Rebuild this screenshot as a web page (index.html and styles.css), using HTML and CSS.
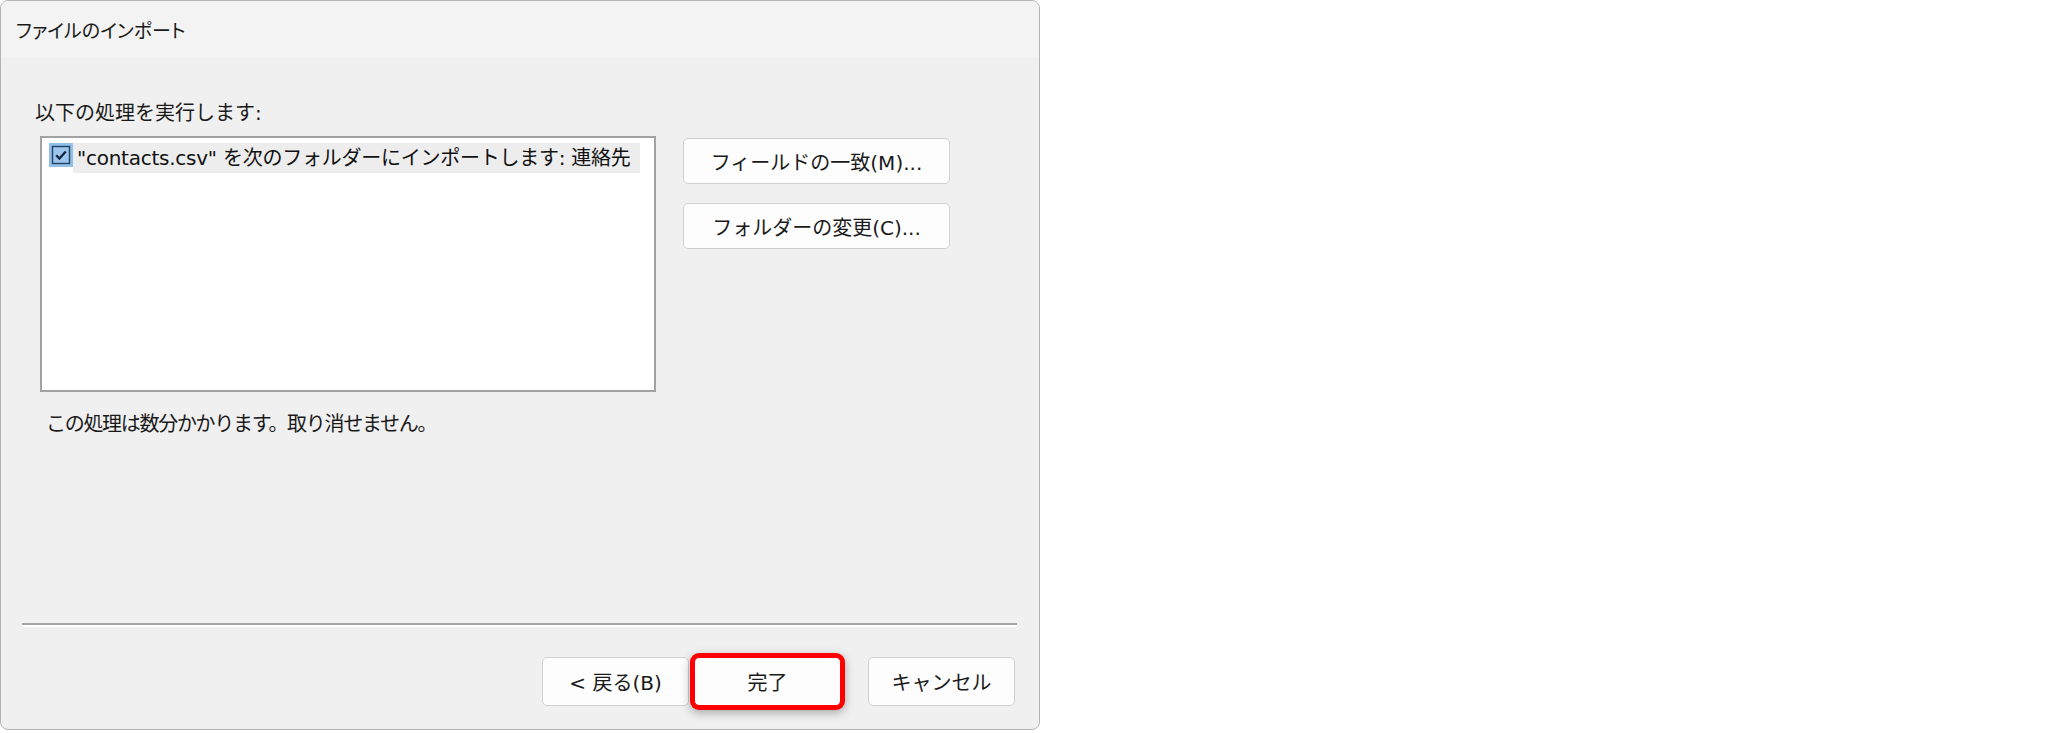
FILE: index.html
```html
<!DOCTYPE html>
<html lang="ja">
<head>
    <meta charset="utf-8">
    <title>ファイルのインポート</title>
    <link rel="stylesheet" href="styles.css">
</head>
<body>

    <div class="dialog">

        <header class="titlebar">ファイルのインポート</header>

        <section class="content">
            <div class="label">以下の処理を実行します:</div>

            <div class="work">
                <div class="listbox">
                    <div class="item">
                        <svg class="check" width="24" height="24" viewBox="0 0 24 24">
                            <rect x="0" y="0" width="24" height="24" fill="#93c0ea"/>
                            <rect x="3.5" y="3.5" width="17" height="17" fill="#9cc6ee" stroke="#22405f" stroke-width="1.4"/>
                            <path d="M7.2 12.2 L10.4 15.6 L16.8 8.4" fill="none" stroke="#0d2642" stroke-width="2.2"/>
                        </svg>
                        <span class="item_text">"contacts.csv" を次のフォルダーにインポートします: 連絡先</span>
                    </div>
                </div>

                <div class="side_buttons">
                    <button class="button side">フィールドの一致(M)...</button>
                    <button class="button side">フォルダーの変更(C)...</button>
                </div>
            </div>

            <div class="note">この処理は数分かかります。取り消せません。</div>
        </section>

        <footer class="footer">
            <div class="separator"></div>
            <div class="actions">
                <button class="button">&lt; 戻る(B)</button>
                <button class="button finish">完了</button>
                <button class="button cancel">キャンセル</button>
            </div>
        </footer>

    </div>

</body>
</html>
```

FILE: styles.css
```css
/*Page.*/
body {
    margin: 0;
    background-color: #ffffff;
    font-family: "DejaVu Sans", "Noto Sans CJK JP", sans-serif;
    font-size: 20px;
    line-height: 24px;
    color: #1a1a1a;
}

/*Dialog frame.*/
.dialog {
    box-sizing: border-box;
    width: 1040px;
    height: 730px;
    border: 1px solid #b4b4b4;
    border-radius: 8px;
    overflow: hidden;
    background-color: #f0f0f0;
    display: flex;
    flex-direction: column;
}

.titlebar {
    height: 56px;
    padding: 4px 0 0 15px;
    box-sizing: border-box;
    display: flex;
    align-items: center;
    background-color: #f3f3f3;
    font-size: 19px;
    font-feature-settings: "palt";
}

/*Main area.*/
.content {
    padding-left: 34px;
}

.label {
    margin-top: 44px;
}

.work {
    display: flex;
    gap: 27px;
    margin: 11px 0 0 5px;
}

.listbox {
    box-sizing: border-box;
    width: 616px;
    height: 256px;
    border: 2px solid #a2a2a2;
    background-color: #ffffff;
    padding: 5px 0 0 7px;
}

.item {
    display: flex;
    align-items: flex-start;
}

.check {
    display: block;
    flex: none;
}

.item_text {
    height: 30px;
    line-height: 30px;
    padding: 0 10px 0 4px;
    background-color: #ededed;
    color: #111111;
    white-space: nowrap;
    letter-spacing: -0.25px;
}

.side_buttons {
    display: flex;
    flex-direction: column;
    gap: 19px;
    padding-top: 2px;
}

.note {
    margin: 20px 0 0 11px;
    letter-spacing: -1.3px;
}

/*Buttons.*/
.button {
    box-sizing: border-box;
    width: 147px;
    height: 49px;
    padding: 0;
    border: 1px solid #d0d0d0;
    border-radius: 5px;
    background-color: #fdfdfd;
    font-family: inherit;
    font-size: 20px;
    color: #1a1a1a;
}

.side {
    width: 267px;
    height: 46px;
}

/*Footer with separator.*/
.footer {
    margin-top: auto;
}

.separator {
    margin: 0 22px 0 21px;
    border-top: 2px solid #a3a3a3;
    border-bottom: 2px solid #ffffff;
}

.actions {
    display: flex;
    justify-content: flex-end;
    gap: 5px;
    margin: 30px 24px 23px 0;
}

.finish {
    border-color: #ff0000;
    box-shadow: 0 0 0 4px #ff0000, 0 3px 10px 4px rgba(0, 0, 0, 0.3);
}

.cancel {
    margin-left: 22px;
}
```
